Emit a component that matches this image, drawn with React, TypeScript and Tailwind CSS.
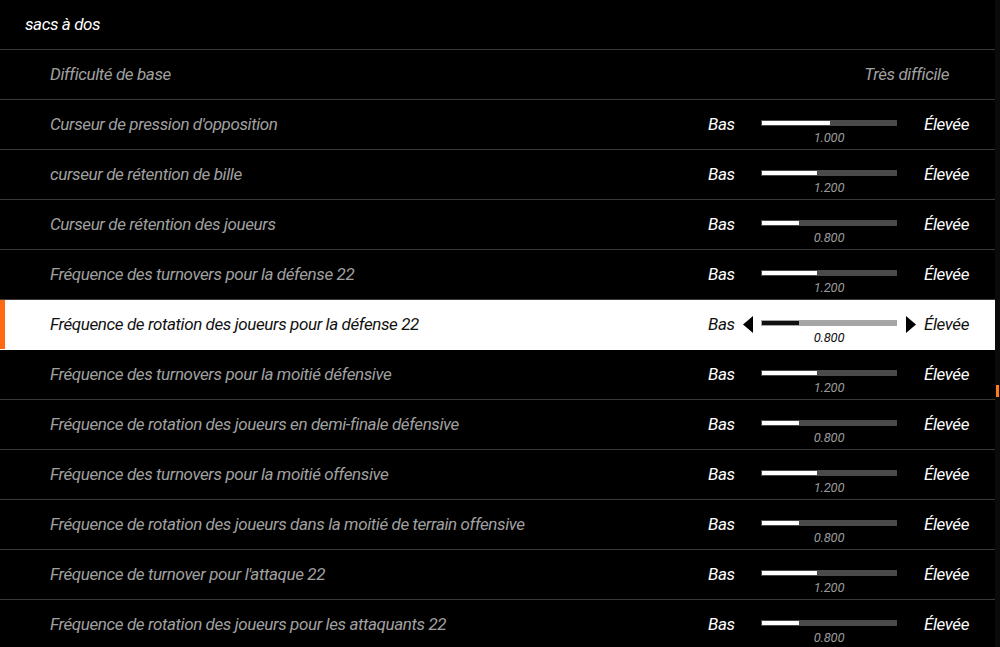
import React from 'react';

type Ligne = {
  nom: string;
  valeur: string;
  remplissage: number; // largeur de la partie pleine, en px
};

const lignes: Ligne[] = [
  { nom: "Curseur de pression d'opposition", valeur: '1.000', remplissage: 68 },
  { nom: 'curseur de rétention de bille', valeur: '1.200', remplissage: 55 },
  { nom: 'Curseur de rétention des joueurs', valeur: '0.800', remplissage: 37 },
  { nom: 'Fréquence des turnovers pour la défense 22', valeur: '1.200', remplissage: 55 },
  { nom: 'Fréquence de rotation des joueurs pour la défense 22', valeur: '0.800', remplissage: 37 },
  { nom: 'Fréquence des turnovers pour la moitié défensive', valeur: '1.200', remplissage: 55 },
  { nom: 'Fréquence de rotation des joueurs en demi-finale défensive', valeur: '0.800', remplissage: 37 },
  { nom: 'Fréquence des turnovers pour la moitié offensive', valeur: '1.200', remplissage: 55 },
  { nom: 'Fréquence de rotation des joueurs dans la moitié de terrain offensive', valeur: '0.800', remplissage: 37 },
  { nom: "Fréquence de turnover pour l'attaque 22", valeur: '1.200', remplissage: 55 },
  { nom: 'Fréquence de rotation des joueurs pour les attaquants 22', valeur: '0.800', remplissage: 37 },
];

const SELECTION = 4;

function Fleche({ sens }: { sens: 'gauche' | 'droite' }) {
  return (
    <svg width="10" height="17" viewBox="0 0 10 17">
      {sens === 'gauche' ? (
        <polygon points="10,0 10,17 0,8.5" fill="#000" />
      ) : (
        <polygon points="0,0 0,17 10,8.5" fill="#000" />
      )}
    </svg>
  );
}

function Curseur({ ligne, actif }: { ligne: Ligne; actif: boolean }) {
  return (
    <div className="flex h-full items-center pr-[25px]">
      <span className={`w-[26px] text-[17px] ${actif ? 'text-[#111]' : 'text-white'}`}>Bas</span>
      <div className="flex w-[27px] justify-center">{actif && <Fleche sens="gauche" />}</div>
      <div className="flex h-full w-[136px] flex-col items-center pt-[20px]">
        <div className={`h-[6px] w-full p-[1px] ${actif ? 'bg-[#a6a6a6]' : 'bg-[#4a4a4a]'}`}>
          <div
            className={`h-full ${actif ? 'bg-[#111]' : 'bg-white'}`}
            style={{ width: ligne.remplissage }}
          />
        </div>
        <span className={`mt-[4px] text-[13px] leading-[15px] tracking-[-0.2px] ${actif ? 'text-[#111]' : 'text-[#9a9a9a]'}`}>
          {ligne.valeur}
        </span>
      </div>
      <div className="flex w-[27px] justify-center">{actif && <Fleche sens="droite" />}</div>
      <span className={`w-[46px] whitespace-nowrap text-[17px] ${actif ? 'text-[#111]' : 'text-white'}`}>Élevée</span>
    </div>
  );
}

export default function App() {
  return (
    <div
      className="flex h-[647px] w-[1000px] overflow-hidden bg-black italic tracking-[-0.4px]"
      style={{ fontFamily: 'Roboto, "Noto Sans", sans-serif' }}
    >
      <div className="w-[995px]">
        <div className="flex h-[50px] items-center border-b border-[#3a3a3a] pl-[25px] text-[17px] text-white">
          sacs à dos
        </div>
        <div className="flex h-[50px] items-center justify-between border-b border-[#3a3a3a] pl-[50px] pr-[46px] text-[17px] text-[#a0a0a0]">
          <span>Difficulté de base</span>
          <span>Très difficile</span>
        </div>
        {lignes.map((ligne, i) => {
          const actif = i === SELECTION;
          return (
            <div
              key={ligne.nom}
              className={`flex h-[50px] items-center border-b ${
                actif ? 'border-white bg-white' : 'border-[#3a3a3a]'
              }`}
            >
              <div className={`h-full w-[5px] ${actif ? 'bg-[#ff6a13]' : ''}`} />
              <span
                className={`flex-1 pl-[45px] text-[17px] ${actif ? 'text-[#111]' : 'text-[#a0a0a0]'}`}
              >
                {ligne.nom}
              </span>
              <Curseur ligne={ligne} actif={actif} />
            </div>
          );
        })}
      </div>
      {/* barre de défilement */}
      <div className="flex w-[5px] flex-col bg-[#0a0a0a]">
        <div className="h-[385px]" />
        <div className="ml-[1px] h-[12px] w-[3px] bg-[#ff7a1a]" />
      </div>
    </div>
  );
}
